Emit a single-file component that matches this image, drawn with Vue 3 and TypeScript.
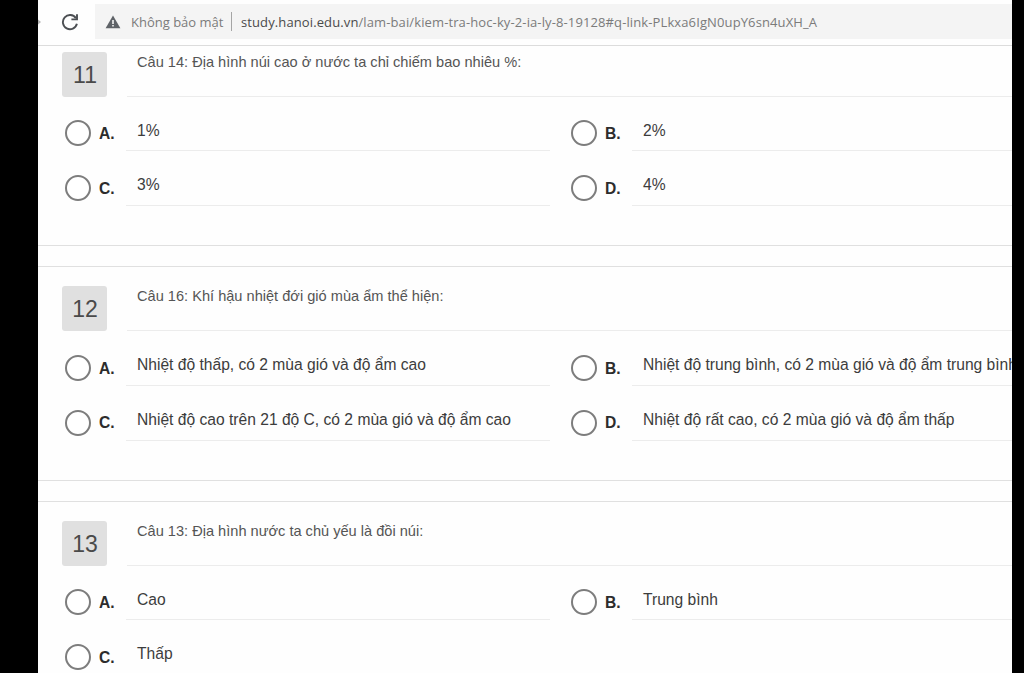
<script setup lang="ts">
import { ref } from 'vue'

interface Option {
  key: string
  text: string
}

interface Question {
  id: number
  title: string
  options: Option[]
}

const host = 'study.hanoi.edu.vn'
const path = '/lam-bai/kiem-tra-hoc-ky-2-ia-ly-8-19128#q-link-PLkxa6IgN0upY6sn4uXH_A'

const answers = ref<Record<number, string>>({})

const questions = ref<Question[]>([
  {
    id: 11,
    title: 'Câu 14: Địa hình núi cao ở nước ta chỉ chiếm bao nhiêu %:',
    options: [
      { key: 'A', text: '1%' },
      { key: 'B', text: '2%' },
      { key: 'C', text: '3%' },
      { key: 'D', text: '4%' }
    ]
  },
  {
    id: 12,
    title: 'Câu 16: Khí hậu nhiệt đới gió mùa ẩm thể hiện:',
    options: [
      { key: 'A', text: 'Nhiệt độ thấp, có 2 mùa gió và độ ẩm cao' },
      { key: 'B', text: 'Nhiệt độ trung bình, có 2 mùa gió và độ ẩm trung bình' },
      { key: 'C', text: 'Nhiệt độ cao trên 21 độ C, có 2 mùa gió và độ ẩm cao' },
      { key: 'D', text: 'Nhiệt độ rất cao, có 2 mùa gió và độ ẩm thấp' }
    ]
  },
  {
    id: 13,
    title: 'Câu 13: Địa hình nước ta chủ yếu là đồi núi:',
    options: [
      { key: 'A', text: 'Cao' },
      { key: 'B', text: 'Trung bình' },
      { key: 'C', text: 'Thấp' }
    ]
  }
])
</script>

<template>
  <div class="screen">
    <div class="window">
      <header class="toolbar">
        <svg class="forward" width="4" height="8" viewBox="0 0 4 8">
          <path d="M0 1.5 L3 4 L0 6.5 Z" fill="#b4b4b4" />
        </svg>
        <svg class="reload" width="18" height="18" viewBox="0 0 18 18">
          <path d="M14.9 5.2 A7.1 7.1 0 1 0 15.9 10.8" fill="none" stroke="#4c4f53" stroke-width="1.9" />
          <path d="M16 1.2 V6.4 H10.4" fill="none" stroke="#4c4f53" stroke-width="1.9" />
        </svg>
        <div class="address">
          <svg class="warning" width="16" height="14" viewBox="0 0 16 14">
            <path d="M8 0.5 L15.4 13.3 H0.6 Z" fill="#5f6368" />
            <path d="M7.2 5 H8.8 V8.9 H7.2 Z M7.2 10 H8.8 V11.6 H7.2 Z" fill="#f3f3f3" />
          </svg>
          <span class="insecure">Không bảo mật</span>
          <span class="divider"></span>
          <span class="url"><span class="host">{{ host }}</span>{{ path }}</span>
        </div>
      </header>

      <main class="page">
        <section v-for="question in questions" :key="question.id" class="question">
          <div class="heading">
            <div class="number">{{ question.id }}</div>
            <div class="title"><span>{{ question.title }}</span></div>
          </div>
          <div class="options">
            <label v-for="option in question.options" :key="option.key" class="option">
              <input v-model="answers[question.id]" type="radio" :name="'q' + question.id" :value="option.key" />
              <b class="letter">{{ option.key }}.</b>
              <span class="text"><span>{{ option.text }}</span></span>
            </label>
          </div>
        </section>
      </main>
    </div>
  </div>
</template>

<style>
body {
  margin: 0;
  background: #000;
}
</style>

<style scoped>
.screen {
  height: 673px;
  padding: 0 12px 0 38px;
  background: #000;
  overflow: hidden;
  font-family: "Liberation Sans", Arial, sans-serif;
}

.window {
  height: 673px;
  background: #fefefe;
  overflow: hidden;
}

.toolbar {
  position: relative;
  z-index: 1;
  display: flex;
  align-items: center;
  box-sizing: border-box;
  height: 46px;
  padding-bottom: 2px;
  border-bottom: 1px solid #dcdcdc;
  background: #fefefe;
}

.reload {
  margin: 0 16px 0 19px;
}

.address {
  flex: 1;
  display: flex;
  align-items: center;
  height: 35px;
  padding-left: 10px;
  background: #f4f4f4;
  color: #7b7b7b;
  font-family: "Open Sans", "Noto Sans", sans-serif;
  font-size: 13px;
  white-space: nowrap;
}

.insecure {
  margin-left: 10px;
}

.divider {
  width: 1px;
  height: 19px;
  margin: 0 8.5px 0 8px;
  background: #a5a5a5;
}

.url {
  letter-spacing: 0.115px;
}

.host {
  color: #4a4a4a;
}

.page {
  margin-top: -14.4px;
}

.question {
  box-sizing: border-box;
  height: 214.5px;
  margin-bottom: 20px;
  padding: 19.2px 0 0 24px;
  border: solid #e0e0e0;
  border-width: 1px 0;
}

.heading {
  display: flex;
}

.number {
  box-sizing: border-box;
  width: 45px;
  height: 45px;
  padding-left: 1px;
  border-radius: 3px;
  background: #e0e0e0;
  color: #4a4a4a;
  font-size: 23px;
  line-height: 46px;
  text-align: center;
}

.title {
  flex: 1;
  box-sizing: border-box;
  height: 45px;
  margin-left: 20px;
  padding-left: 10px;
  border-bottom: 1px solid #ececec;
  color: #555;
  font-size: 14.6px;
  line-height: 20.4px;
}

.options {
  display: grid;
  grid-template-columns: 488px 488px;
  column-gap: 18px;
  width: 995px;
}

.option {
  display: flex;
  height: 54.7px;
}

input {
  appearance: none;
  box-sizing: border-box;
  flex: none;
  width: 26px;
  height: 26px;
  margin: 23.7px 0 0 3.3px;
  border: 2px solid #7d7d7d;
  border-radius: 50%;
  background: #fff;
}

input:checked {
  background: radial-gradient(#555 0 6px, #fff 7px);
}

.letter {
  width: 20px;
  margin: 27.3px 0 0 7.7px;
  color: #2c2c2c;
  font-size: 15.6px;
  line-height: 20px;
}

.text {
  flex: 1;
  box-sizing: border-box;
  margin-left: 7px;
  padding: 24px 0 0 11px;
  border-bottom: 1px solid #ececec;
  color: #3c3c3c;
  font-size: 15.62px;
  line-height: 20px;
  white-space: nowrap;
}
</style>
